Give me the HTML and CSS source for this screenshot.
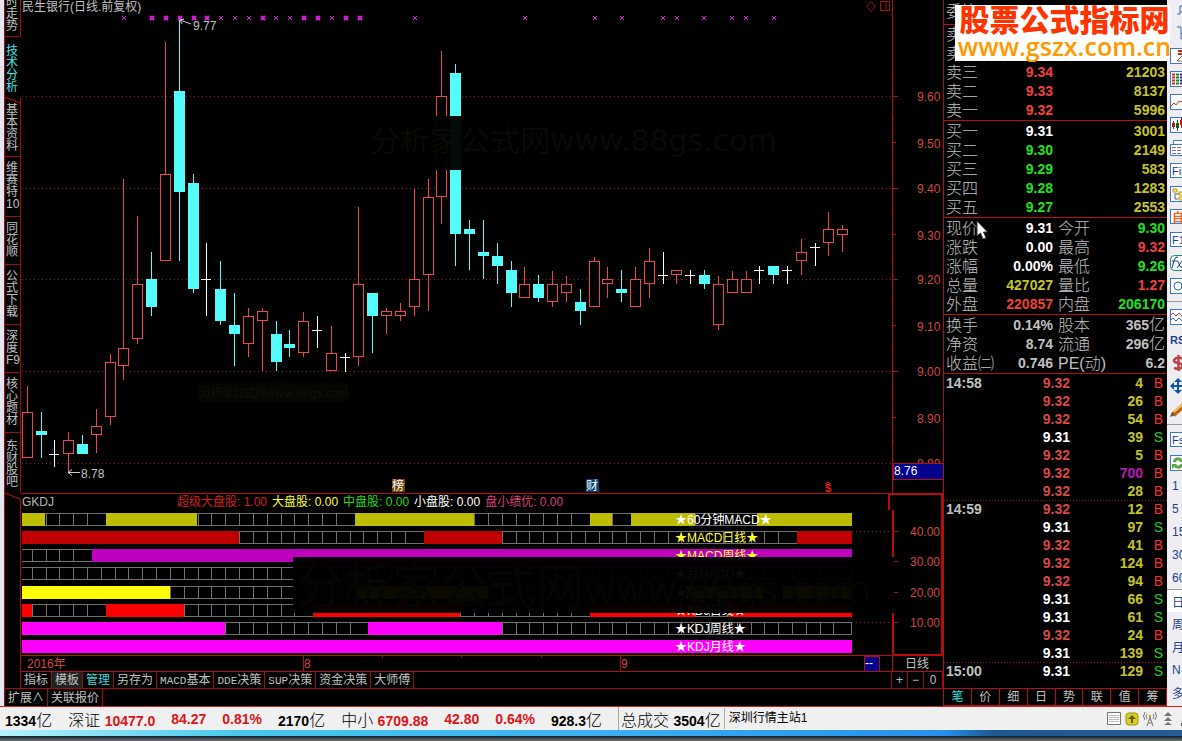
FILE: index.html
```html
<!DOCTYPE html>
<html lang="zh-CN">
<head>
<meta charset="utf-8">
<title>民生银行 日线</title>
<link rel="stylesheet" href="styles.css">
</head>
<body>
<main class="workspace">
  <section class="left">
    <div class="stage">
      <nav class="rail" aria-label="视图">
        <button class="rail-tab t-first">时走势</button>
        <button class="rail-tab active">技术分析</button>
        <button class="rail-tab t-slant">基本资料<svg class="slant" viewBox="0 0 17 7" aria-hidden="true"><path d="M0 0 16 6.500"/></svg></button>
        <button class="rail-tab">维赛特10</button>
        <button class="rail-tab short">同花顺</button>
        <button class="rail-tab">公式下载</button>
        <button class="rail-tab short">深度F9</button>
        <button class="rail-tab">核心题材</button>
        <button class="rail-tab last">东财股吧</button>
        <svg class="slant-end" viewBox="0 0 17 7" aria-hidden="true"><path d="M0 0 16 6.500"/></svg>
      </nav>
      <div class="charts">
        <svg class="chart" id="price" viewBox="21 0 922 493" role="img" aria-label="日线K线图"></svg>
        <div class="legend">
          <span class="legend-name">GKDJ</span>
          <span class="c-red">超级大盘股: 1.00</span>
          <span class="c-yellow">大盘股: 0.00</span>
          <span class="c-green">中盘股: 0.00</span>
          <span class="c-white">小盘股: 0.00</span>
          <span class="c-pink">盘小绩优: 0.00</span>
        </div>
        <svg class="chart" id="signals" viewBox="21 510 922 162" role="img" aria-label="GKDJ 指标"></svg>
        <div class="templates">
          <button>指标</button><button class="shade">模板</button><button class="active">管理</button><button>另存为</button><button><i>MACD</i>基本</button><button><i>DDE</i>决策</button><button><i>SUP</i>决策</button><button>资金决策</button><button>大师傅</button>
          <div class="zoomers"><button>+</button><button>−</button><button>0</button></div>
        </div>
      </div>
    </div>
    <div class="extend"><button>扩展∧</button><button>关联报价</button></div>
  </section>

  <aside class="quote">
    <table class="book asks">
      <tr class="ratio"><th>委比</th><td></td><td></td></tr>
      <tr><th>卖五</th><td></td><td></td></tr>
      <tr><th>卖四</th><td></td><td></td></tr>
      <tr><th>卖三</th><td class="up">9.34</td><td class="vol">21203</td></tr>
      <tr><th>卖二</th><td class="up">9.33</td><td class="vol">8137</td></tr>
      <tr><th>卖一</th><td class="up">9.32</td><td class="vol">5996</td></tr>
    </table>
    <table class="book">
      <tr><th>买一</th><td class="flat">9.31</td><td class="vol">3001</td></tr>
      <tr><th>买二</th><td class="down">9.30</td><td class="vol">2149</td></tr>
      <tr><th>买三</th><td class="down">9.29</td><td class="vol">583</td></tr>
      <tr><th>买四</th><td class="down">9.28</td><td class="vol">1283</td></tr>
      <tr><th>买五</th><td class="down">9.27</td><td class="vol">2553</td></tr>
    </table>
    <table class="info">
      <tr><th>现价</th><td class="flat">9.31</td><th>今开</th><td class="down">9.30</td></tr>
      <tr><th>涨跌</th><td class="flat">0.00</td><th>最高</th><td class="up">9.32</td></tr>
      <tr><th>涨幅</th><td class="flat">0.00%</td><th>最低</th><td class="down">9.26</td></tr>
      <tr><th>总量</th><td class="vol">427027</td><th>量比</th><td class="up">1.27</td></tr>
      <tr><th>外盘</th><td class="up">220857</td><th>内盘</th><td class="down">206170</td></tr>
    </table>
    <table class="info funda">
      <tr><th>换手</th><td>0.14%</td><th>股本</th><td>365<span>亿</span></td></tr>
      <tr><th>净资</th><td>8.74</td><th>流通</th><td>296<span>亿</span></td></tr>
      <tr><th>收益㈡</th><td>0.746</td><th>PE(动)</th><td>6.2</td></tr>
    </table>
    <table class="ticks">
      <tr><th>14:58</th><td class="up">9.32</td><td class="vol">4</td><td class="buy">B</td></tr>
      <tr><th></th><td class="up">9.32</td><td class="vol">26</td><td class="buy">B</td></tr>
      <tr><th></th><td class="up">9.32</td><td class="vol">54</td><td class="buy">B</td></tr>
      <tr><th></th><td class="flat">9.31</td><td class="vol">39</td><td class="sell">S</td></tr>
      <tr><th></th><td class="up">9.32</td><td class="vol">5</td><td class="buy">B</td></tr>
      <tr><th></th><td class="up">9.32</td><td class="big">700</td><td class="buy">B</td></tr>
      <tr><th></th><td class="up">9.32</td><td class="vol">28</td><td class="buy">B</td></tr>
      <tr class="minute"><th>14:59</th><td class="up">9.32</td><td class="vol">12</td><td class="buy">B</td></tr>
      <tr><th></th><td class="flat">9.31</td><td class="vol">97</td><td class="sell">S</td></tr>
      <tr><th></th><td class="up">9.32</td><td class="vol">41</td><td class="buy">B</td></tr>
      <tr><th></th><td class="up">9.32</td><td class="vol">124</td><td class="buy">B</td></tr>
      <tr><th></th><td class="up">9.32</td><td class="vol">94</td><td class="buy">B</td></tr>
      <tr><th></th><td class="flat">9.31</td><td class="vol">66</td><td class="sell">S</td></tr>
      <tr><th></th><td class="flat">9.31</td><td class="vol">61</td><td class="sell">S</td></tr>
      <tr><th></th><td class="up">9.32</td><td class="vol">24</td><td class="buy">B</td></tr>
      <tr><th></th><td class="flat">9.31</td><td class="vol">139</td><td class="sell">S</td></tr>
      <tr class="minute"><th>15:00</th><td class="flat">9.31</td><td class="vol">129</td><td class="sell">S</td></tr>
    </table>
    <div class="quote-tabs"><button class="active">笔</button><button>价</button><button>细</button><button>日</button><button>势</button><button>联</button><button>值</button><button>筹</button></div>
    <svg class="cursor" viewBox="0 0 12 21" aria-hidden="true"><path d="M1 1v15l3.500-3 2.500 6 3-1-2.500-6h4z"/></svg>
  </aside>

  <nav class="tools" aria-label="工具">
    <button class="first" aria-label="分时"><svg viewBox="0 0 18 16"><path d="M7 11h3V3h8M10 9h4" stroke="#3c68b8"/></svg></button>
    <button aria-label="走势"><svg viewBox="0 0 18 16"><path d="M7 2h4v12h7M11 8l7 6" stroke="#3c68b8"/></svg></button>
    <button aria-label="报表"><svg viewBox="0 0 18 16"><rect class="box" x=".5" y=".5" width="20" height="15"/><path d="M8 3h10M8 6h10" stroke="#c22" stroke-width="2"/><path d="M7 13l5-5m-5 5h8" stroke="#765"/></svg></button>
    <button aria-label="行情"><svg viewBox="0 0 18 16"><rect class="box" x=".5" y=".5" width="20" height="15"/><path d="M2 3.500h3M2 6.500h3M2 9.500h3M2 12.500h3" stroke="#c22" stroke-width="2"/><path d="M6 3.500h3M6 6.500h3M6 9.500h3M6 12.500h3" stroke="#181" stroke-width="2"/><path d="M10 3.500h8M10 6.500h8M10 9.500h8M10 12.500h8" stroke="#22a" stroke-width="2"/></svg></button>
    <button aria-label="折线"><svg viewBox="0 0 18 16"><rect class="box" x=".5" y=".5" width="20" height="15"/><path d="M1 12l3-3 2 2 3-4 2 1 5-5" stroke="#c33"/></svg></button>
    <button aria-label="K线"><svg viewBox="0 0 18 16"><rect class="box" x=".5" y=".5" width="20" height="15"/><path d="M3.500 4v8M11.500 1v10" stroke="#c11"/><path d="M2 6h3v4H2zM10 3h5v5h-5z" fill="#c11"/><path d="M7.500 3v11" stroke="#161"/><path d="M6 6h3v5H6z" fill="#161"/></svg></button>
    <button aria-label="资讯"><svg viewBox="0 0 18 16"><path class="box" d="M.5 4.500h20v11H.5zM3.500 4V.5h16"/><path d="M2 7.500h4M7 7.500h4M12 7.500h6M2 10.500h4M7 10.500h4M12 10.500h6M2 13.500h4M7 13.500h4M12 13.500h6" stroke="#777"/></svg></button>
    <button class="lab">Fid</button>
    <button aria-label="树形"><svg viewBox="0 0 18 16"><rect class="box" x=".5" y=".5" width="20" height="15"/><path d="M3 3h4v3H3zM9 6h5v3H9zM9 11h5v3H9z" fill="#fe7" stroke="#c90"/><path d="M5 7v6h3M6 8h3" stroke="#369"/></svg></button>
    <button class="lab orange">自</button>
    <button class="lab">F12</button>
    <button aria-label="公式"><svg viewBox="0 0 18 16"><rect x=".5" y=".5" width="20" height="15" rx="4" fill="#fff" stroke="#286"/><path d="M8 2q-3-1-4 4l-2 7M2 6h5M7 6q2 0 2 3t3 3M12 6l-5 7" stroke="#147"/></svg></button>
    <button aria-label="圆"><svg viewBox="0 0 18 16"><rect class="box" x=".5" y=".5" width="20" height="15"/><circle cx="8" cy="8" r="4" stroke="#36a" fill="none"/></svg></button>
    <hr>
    <button aria-label="波浪"><svg viewBox="0 0 18 16"><rect class="box" x=".5" y=".5" width="20" height="15"/><path d="M1 6l2-2 3 3 3-3 3 3 4-3" stroke="#c33"/><path d="M1 11l2-2 3 3 3-3 3 3 4-3" stroke="#36a"/></svg></button>
    <button class="word">RSI</button>
    <button aria-label="资金"><svg viewBox="0 0 18 16"><path d="M13 4Q8 1 5 4t3 4 4 4-8 1M8.500 0v16" stroke="#b44" stroke-width="2.500"/></svg></button>
    <button aria-label="移动"><svg viewBox="0 0 18 16"><path d="M8 0l4 4H9v3h3V4l4 4-4 4V9H9v3h3l-4 4-4-4h3V9H4v3L0 8l4-4v3h3V4H4z" fill="#15a"/></svg></button>
    <button aria-label="画线"><svg viewBox="0 0 18 16"><path d="M3 14L15 3" stroke="#b86818" stroke-width="5"/><path d="M4 11L14 2" stroke="#fb5" stroke-width="2"/><path d="M0 16l2-5 3 3z" fill="#654"/></svg></button>
    <hr>
    <button class="lab">Fs</button>
    <button aria-label="刷新"><svg viewBox="0 0 18 16"><rect class="box" x=".5" y=".5" width="20" height="15"/><path d="M4 7q2-5 7-2M12 9q-2 5-7 2" stroke="#5a4" stroke-width="3"/><path d="M9 7h5V2zM7 9H2v5z" fill="#5a4"/></svg></button>
    <button class="num">1</button>
    <button class="num">5</button>
    <button class="num">15</button>
    <button class="num">30</button>
    <button class="num">60</button>
    <button class="num pressed">日</button>
    <button class="num">周</button>
    <button class="num">月</button>
    <button class="num">N</button>
    <button class="num">多</button>
  </nav>

  <a class="brand" href="#"><strong>股票公式指标网</strong><span>www.gszx.com.cn</span></a>
</main>

<footer class="status">
  <div class="status-row">
    <span><b>1334</b>亿</span>
    <span class="index">深证 <b class="rise">10477.0</b></span>
    <b class="rise">84.27</b>
    <b class="rise">0.81%</b>
    <span><b>2170</b>亿</span>
    <span class="index">中小 <b class="rise">6709.88</b></span>
    <b class="rise">42.80</b>
    <b class="rise">0.64%</b>
    <span><b>928.3</b>亿</span>
    <span class="total">总成交 <b>3504</b>亿</span>
    <span class="host">深圳行情主站1</span>
    <span class="tray">
      <svg viewBox="0 0 15 14"><path d="M.5.5h13v12H.5z" fill="#fff" stroke="#777"/><path d="M2 3.500h10M2 5.500h10M2 7.500h10M2 9.500h10" stroke="#bbb"/></svg>
      <svg viewBox="0 0 15 14"><rect x="1" y="1" width="12" height="12" rx="3" fill="#d8d020" stroke="#98900c"/><path d="M7 3l4 4H8v4H6V7H3z" fill="#665f00"/></svg>
      <svg viewBox="0 0 15 14"><path d="M7 5L4 14M7 5l3 9M5 11h4M6 8h2M4 2Q2 4 4 7M10 2q2 2 0 5M2 0q-3 4 0 8M12 0q3 4 0 8" stroke="#777" fill="none"/><path d="M6 3h2v2H6z" fill="#c90"/></svg>
      <svg viewBox="0 0 15 14"><path d="M7 0l4 4H3zM7 5l4 4H3zM7 10l4 3H3z" fill="#777"/></svg>
      <svg viewBox="0 0 15 14"><path d="M4 0v9l4-4zM2 11h3v3H2z" fill="#666"/></svg>
    </span>
  </div>
  <div class="glow"></div>
  <div class="shadow"></div>
</footer>
<script src="chart.js"></script>
</body>
</html>
```

FILE: styles.css
```css
* { box-sizing: border-box; }
body {
  margin: 0;
  background: #000;
  color: #c0c0c0;
  font-family: "Liberation Sans", "Noto Sans CJK SC", sans-serif;
  font-size: 12px;
  overflow-x: hidden;
}
button {
  margin: 0;
  padding: 0;
  border: 0;
  background: none;
  color: inherit;
  font: inherit;
}
svg { display: block; fill: none; }
.workspace {
  position: relative;
  display: grid;
  grid-template-columns: minmax(0, 1fr) 224px 15px;
}
.left { border-left: 4px solid #e6e6f0; }
.stage { display: flex; }
.charts { flex: 1; min-width: 0; }
.chart { width: 100%; height: auto; }

/* vertical view tabs */
.rail { width: 17px; display: flex; flex-direction: column; border-left: 1px solid #a00c0c; }
.rail-tab {
  position: relative;
  height: 60px;
  padding: 5px 0 0 1px;
  border-right: 1px solid #a00c0c;
  border-bottom: 1px solid #a00c0c;
  line-height: 12px;
  text-align: left;
  word-break: break-all;
  display: flex;
  align-items: flex-start;
}
.rail-tab.t-first { height: 37px; align-items: flex-end; padding-bottom: 4px; overflow: hidden; }
.rail-tab.active { color: #40e8e8; border-right-color: transparent; border-bottom-color: transparent; padding-top: 8px; }
.rail-tab.t-slant { padding-top: 7px; }
.rail-tab.short { height: 48px; }
.rail-tab.last { border-bottom-color: transparent; padding-top: 7px; }
.slant { position: absolute; left: 0; top: 0; width: 17px; height: 7px; }
.slant path, .slant-end path { stroke: #c01010; }
.slant-end { width: 17px; height: 7px; }
.rail::after { content: ""; flex: 1; border-right: 1px solid #a00c0c; }

.legend { display: flex; gap: 5px; height: 17px; line-height: 17px; padding-left: 1px; border-top: 1px solid #b01010; white-space: nowrap; overflow: hidden; }
.legend::after { content: ""; width: 51px; margin-left: auto; border: solid #b80c0c; border-width: 1px 2px 0; }
.legend-name { width: 150px; color: #b8b8b8; }
.c-red { color: #d02020; }
.c-yellow { color: #ffff30; }
.c-green { color: #20d820; }
.c-white { color: #fff; }
.c-pink { color: #d84078; }

.templates { display: flex; height: 16px; overflow: hidden; }
.templates button { height: 16px; line-height: 16px; padding: 0 3px; border-right: 1px solid #a00c0c; white-space: nowrap; }
.templates i { font: 11px "Liberation Mono", monospace; }
.templates .shade { background: #222; }
.templates .active { color: #30d8d8; }
.zoomers { margin-left: auto; display: flex; border-left: 1px solid #a00c0c; }
.zoomers button { width: 16px; text-align: center; }
.zoomers button:last-child { width: 19px; }
.extend { display: flex; height: 18px; border-top: 1px solid #a00c0c; border-left: 1px solid #a00c0c; }
.extend button { padding: 0 3px; border-right: 1px solid #a00c0c; line-height: 16px; }

/* chart drawing */
.chart text { fill: #c0c0c0; font-size: 12px; }
.chart line, .chart .sharp { shape-rendering: crispEdges; }
.chart .axis { stroke: #b01010; }
.chart .axis-bold { stroke: #b80c0c; stroke-width: 2; }
.chart .guide { stroke: #8c2020; stroke-dasharray: 1 3; }
.chart .rise { stroke: #e84848; fill: #000; }
.chart .fall { stroke: #54fcfc; fill: #54fcfc; }
.chart .even { stroke: #fff; fill: #fff; }
.chart .mark { stroke: #e020e0; }
.chart .scale { fill: #d04848; }
.chart .cell { stroke: #707070; }
.chart .bright { fill: #fff; }
.chart .lemon { fill: #ffff30; }
.chart .crimson { fill: #e02020; font-weight: bold; font-size: 11px; }
.chart .ghost { fill: #0a0a04; font-family: "DejaVu Sans", "Noto Sans CJK SC", sans-serif; }
.chart .ghost-l { font-size: 30px; }
.chart .ghost-xl { font-size: 48px; fill: #050503; }
.chart .ghost-xl tspan { font-size: 38px; }
.chart .ghost-s { font-size: 11px; fill: #121208; }

/* quote panel */
.quote { position: relative; display: flex; flex-direction: column; border-left: 1px solid #b01010; border-bottom: 1px solid #b01010; font-size: 16px; }
.quote table { width: 100%; border-collapse: collapse; table-layout: fixed; }
.quote th { padding: 0 0 0 2px; text-align: left; font-weight: 300; line-height: 19px; height: 19px; white-space: nowrap; }
.quote td { padding: 0; text-align: right; font-weight: bold; font-size: 14px; line-height: 19px; height: 19px; white-space: nowrap; }
.quote td span { font-size: 16px; font-weight: 300; line-height: 16px; }
.book, .info { border-bottom: 1px solid #b01010; }
.asks .ratio th { height: 24px; border-bottom: 1px solid #b01010; }
.asks .ratio td { height: 24px; border-bottom: 1px solid #b01010; }
.book th { width: 50px; }
.book td:nth-child(2) { width: 59px; }
.book td:last-child, .info td:last-child { padding-right: 2px; }
.info th:nth-child(1) { width: 50px; }
.info td:nth-child(2) { width: 59px; }
.info th:nth-child(3) { width: 55px; padding-left: 5px; }
.book + .book, .info { margin-top: 1px; }
.ticks th { width: 50px; font-weight: bold; font-size: 14px; }
.ticks th, .ticks td { height: 18px; line-height: 18px; }
.ticks td:nth-child(2) { width: 76px; }
.ticks td:nth-child(3) { width: 73px; }
.ticks td:nth-child(4) { padding-right: 4px; font-weight: normal; }
.minute { background: repeating-linear-gradient(90deg, #901818 0 1px, transparent 1px 3px) top / 100% 1px no-repeat; }
.up { color: #f04040; }
.ticks .up { color: #d84848; }
.down { color: #20e020; }
.flat { color: #fff; }
.vol { color: #c4c428; }
.big { color: #b818b8; }
.buy { color: #f03030; }
.sell { color: #20d020; }
.quote-tabs { margin-top: auto; display: flex; height: 17px; border-top: 1px solid #b01010; font-size: 12px; }
.quote-tabs button { flex: 1; line-height: 17px; border-right: 1px solid #b01010; }
.quote-tabs .active { color: #30e0e0; }
.cursor { position: absolute; left: 32px; top: 220px; width: 12px; height: 21px; fill: #fff; stroke: #333; }

/* clipped tool strip */
.tools { display: flex; flex-direction: column; overflow: hidden; background: #eeeef2; color: #20408c; padding-bottom: 2px; }
.tools button { flex: none; height: 23px; width: 30px; padding-left: 3px; text-align: left; display: flex; align-items: center; overflow: hidden; }
.tools .first { height: 21px; }
.tools svg { width: 18px; height: 16px; flex: none; }
.tools .box { fill: #fff; stroke: #4078c8; }
.tools hr { flex: none; width: 15px; height: 1px; margin: 4px 0 3px; border: 0; background: #999; }
.tools .lab { height: 15px; margin: 4px 0 4px 3px; padding-left: 1px; border: 1px solid #4078c8; background: #fff; font-size: 11px; }
.tools .orange { color: #f06020; font-weight: bold; font-size: 12px; }
.tools .word { font-weight: bold; font-size: 11px; }
.tools .num { padding-left: 5px; }
.tools .pressed { background: #fff; border-top: 1px solid #999; }

.brand {
  position: absolute;
  top: 5px;
  right: 12px;
  width: 215px;
  height: 56px;
  padding-left: 4px;
  background: #fff;
  text-decoration: none;
  display: flex;
  flex-direction: column;
  align-items: center;
}
.brand strong { color: #ff3300; font-size: 30px; line-height: 32px; font-weight: 900; }
.brand span { color: #ff9900; font: 600 25px/18px "Open Sans", sans-serif; }

/* status bar */
.status { color: #000; background: #f0f0f0; border-top: 1px solid #d02020; }
.status-row { display: flex; align-items: center; gap: 16px; height: 23px; padding-left: 5px; font-size: 16px; font-weight: 300; white-space: nowrap; overflow: hidden; }
.status b { font-size: 14px; font-weight: 700; }
.status .rise { color: #dc1418; }
.total { border-left: 1px solid #aaa; padding-left: 2px; }
.host { border-left: 1px solid #aaa; padding-left: 4px; margin-left: -13px; font-size: 12px; font-weight: 400; line-height: 21px; }
.tray { margin: 0 -12px 0 auto; display: flex; gap: 3px; }
.tray svg { width: 15px; height: 14px; flex: none; }
.glow { height: 6px; background: linear-gradient(90deg, #b4f4fc, #48c8ec 20%, #3cb0f0 50%, #2890e8 80%, #1c5890 84%, #245c94); }
.shadow { height: 5px; background: linear-gradient(#102028, #707478); }
```

FILE: chart.js
```js
const NS = "http://www.w3.org/2000/svg";

function add(parent, tag, attrs, text) {
  const el = document.createElementNS(NS, tag);
  for (const key in attrs) el.setAttribute(key, attrs[key]);
  if (text !== undefined) el.textContent = text;
  parent.appendChild(el);
  return el;
}
const line = (p, x1, y1, x2, y2, cls) => add(p, "line", { x1, y1, x2, y2, class: cls });
const label = (p, x, y, text, cls) => add(p, "text", { x, y, class: cls || "" }, text);

/* centre, kind, high, body top, body bottom, low */
const candles = [
  [27,"r",386,412,458,458],[41,"f",412,431,435,458],[54,"e",440,454,454,467],[68,"r",432,440,454,472],
  [82,"f",435,444,454,454],[96,"r",409,426,435,453],[110,"r",354,362,417,425],[123,"r",179,348,366,380],
  [137,"r",216,284,339,344],[151,"f",252,279,307,316],[165,"r",42,174,261,261],[179,"f",20,91,192,261],
  [193,"f",174,183,289,293],[206,"e",243,279,279,316],[220,"f",261,289,321,325],[234,"f",293,325,334,366],
  [248,"r",308,316,344,357],[262,"r",308,311,321,371],[276,"f",321,334,362,371],[289,"f",330,344,348,357],
  [303,"r",312,321,353,357],[317,"e",316,330,330,348],[331,"r",326,353,371,371],[345,"e",353,357,357,372],
  [358,"r",207,284,357,366],[372,"f",293,293,316,353],[386,"r",308,311,316,334],[400,"r",303,311,316,321],
  [414,"r",189,279,307,316],[428,"r",179,197,275,311],[441,"r",51,96,197,224],[455,"f",64,73,234,266],
  [469,"f",220,229,234,270],[483,"f",220,252,256,279],[497,"f",243,256,266,284],[511,"f",261,270,293,307],
  [524,"r",267,284,298,298],[538,"f",275,284,298,302],[552,"r",271,284,302,307],[566,"r",276,284,293,302],
  [580,"f",289,302,311,325],[594,"r",257,261,307,307],[607,"r",267,279,284,298],[621,"f",270,289,293,302],
  [635,"r",267,279,307,307],[649,"r",248,261,284,298],[663,"e",252,275,275,284],[676,"r",270,270,275,284],
  [690,"e",270,275,275,284],[704,"f",270,275,284,289],[718,"r",276,284,325,330],[732,"r",271,279,293,293],
  [746,"r",271,279,293,293],[759,"e",266,270,270,284],[773,"f",266,266,275,284],[787,"e",266,270,270,284],
  [801,"r",239,252,261,275],[815,"e",243,247,247,266],[828,"r",212,229,243,256],[842,"r",225,229,235,252]
];
const kinds = { r: "rise", f: "fall", e: "even" };

const price = document.getElementById("price");
for (const y of [96, 188, 279, 371, 463]) {
  line(price, 22, y + 0.5, 892, y + 0.5, "guide");
  line(price, 892, y + 0.5, 898, y + 0.5, "axis");
}
for (const y of [142, 234, 325, 417]) line(price, 892, y + 0.5, 896, y + 0.5, "axis");
for (const y of [73, 119, 165, 211, 257, 302, 348, 394, 440]) line(price, 892, y + 0.5, 894, y + 0.5, "axis");

for (const [cx, kind, high, top, bottom, low] of candles) {
  const cls = kinds[kind];
  const x = cx + 0.5;
  line(price, x, high, x, low, cls);
  if (kind === "e") {
    line(price, cx - 5, top + 0.5, cx + 5, top + 0.5, cls);
    continue;
  }
  add(price, "rect", { x: cx - 4.5, y: top + 0.5, width: 10, height: Math.max(bottom - top - 1, 3), class: cls + " sharp" });
}

const boldMarks = [152, 166, 180, 194, 207, 263, 304, 318, 346, 360];
for (const x of [124,152,166,180,194,207,221,235,249,263,276,290,304,318,332,346,360,415,525,595,622,663,677,704,732,746,774]) {
  add(price, "path", { d: `M${x - 2} 16l4 4m0-4l-4 4`, class: "mark", "stroke-width": boldMarks.includes(x) ? 2 : 1 });
}

label(price, 22, 11, "民生银行(日线.前复权)");
label(price, 193, 30, "9.77");
add(price, "path", { d: "M180 20l11 4M180 20l4-1M180 20l2 4", stroke: "#ccc" });
label(price, 81, 478, "8.78");
add(price, "path", { d: "M68 472.500h12M68 472.500l4-3M68 472.500l4 3", stroke: "#ccc" });

[["9.60", 96], ["9.50", 143], ["9.40", 188], ["9.30", 235], ["9.20", 279], ["9.10", 326], ["9.00", 371], ["8.90", 418], ["8.80", 463]]
  .forEach(([t, y]) => label(price, 917, y + 5, t, "scale"));
add(price, "rect", { x: 893, y: 463, width: 50, height: 16, fill: "#00008c", stroke: "#b01010", class: "sharp" });
label(price, 894, 475, "8.76", "bright");
line(price, 892.5, 0, 892.5, 493, "axis");

add(price, "rect", { x: 392, y: 479, width: 13, height: 13, fill: "#70440c" });
label(price, 392, 490, "榜", "bright");
add(price, "rect", { x: 586, y: 479, width: 13, height: 13, fill: "#104070" });
label(price, 586, 490, "财", "bright");
label(price, 825, 492, "$", "crimson");
add(price, "path", { d: "M825 484l3-2 3 2", stroke: "#e02020" });
add(price, "path", { d: "M866.500 6.500l4.500-5 4.500 5-4.500 5zM880.500 1.500h9v9h-9zM886 1v10", stroke: "#a01414" });

add(price, "rect", { x: 365, y: 116, width: 420, height: 54, fill: "#000", "fill-opacity": 0.96 });
label(price, 370, 151, "分析家公式网www.88gs.com", "ghost ghost-l");
add(price, "rect", { x: 198, y: 383, width: 150, height: 19, fill: "#060601" });
label(price, 200, 397, "分析家公式网www.88gs.com", "ghost ghost-s");

/* signal strips: top, colour, filled spans, caption, caption class */
const strips = [
  [513, "#bdbd00", [[22,45],[106,197],[355,474],[590,612],[631,695],[757,852]], "★60分钟MACD★", "bright"],
  [531, "#bd0000", [[22,239],[424,502],[797,852]], "★MACD日线★", "lemon"],
  [549, "#bd00bd", [[92,852]], "★MACD周线★", "lemon"],
  [567, "#000", [], "★月MACD★", "bright"],
  [586, "#ffff00", [[22,170],[355,488],[686,763],[783,852]], "★60分钟KDJ★", "bright"],
  [604, "#ff0000", [[22,32],[106,184],[313,460],[590,695],[728,852]], "★KDJ日线★", "bright"],
  [622, "#ff00ff", [[22,225],[368,502]], "★KDJ周线★", "bright"],
  [640, "#ff00ff", [[22,852]], "★KDJ月线★", "bright"]
];
const signals = document.getElementById("signals");
for (const y of [531, 561, 592, 622]) {
  line(signals, 852, y + 0.5, 892, y + 0.5, "guide");
  line(signals, 892, y + 0.5, 898, y + 0.5, "axis");
}
line(signals, 893, 510, 893, 655, "axis-bold");
line(signals, 942, 510, 942, 655, "axis-bold");
for (const [y, color, spans, caption, cls] of strips) {
  line(signals, 22, y + 0.5, 852, y + 0.5, "cell");
  line(signals, 22, y + 12.5, 852, y + 12.5, "cell");
  for (const [cx] of candles) {
    const nearFill = spans.some(([a]) => a - cx - 5 > 0 && a - cx - 5 < 8);
    if (!nearFill && cx < 840) line(signals, cx + 5.5, y, cx + 5.5, y + 13, "cell");
  }
  line(signals, 851.5, y, 851.5, y + 13, "cell");
  for (const [a, b] of spans) add(signals, "rect", { x: a, y, width: b - a, height: 13, fill: color, class: "sharp" });
  label(signals, 675, y + 11, caption, cls);
}
add(signals, "rect", { x: 293, y: 557, width: 601, height: 56, fill: "#000", "fill-opacity": 0.96 });
const ghost = label(signals, 296, 603, "分析家公式网", "ghost ghost-xl");
add(ghost, "tspan", {}, "www.88gs.com");
[["40.00", 531], ["30.00", 561], ["20.00", 592], ["10.00", 622]].forEach(([t, y]) => label(signals, 910, y + 5, t, "scale"));

/* time axis */
line(signals, 21, 655.5, 943, 655.5, "axis");
line(signals, 892, 655, 943, 655, "axis-bold");
line(signals, 21, 671.5, 943, 671.5, "axis");
for (const x of [303, 620, 892]) line(signals, x + 0.5, 655, x + 0.5, 671, "axis");
for (const x of [382, 461, 541]) line(signals, x + 0.5, 655, x + 0.5, 658, "axis");
label(signals, 27, 668, "2016年", "scale");
label(signals, 304, 668, "8", "scale");
label(signals, 621, 668, "9", "scale");
add(signals, "rect", { x: 864, y: 656, width: 15, height: 15, fill: "#00008c", stroke: "#b01010", class: "sharp" });
label(signals, 865, 667, "--", "bright");
label(signals, 905, 668, "日线");
```
